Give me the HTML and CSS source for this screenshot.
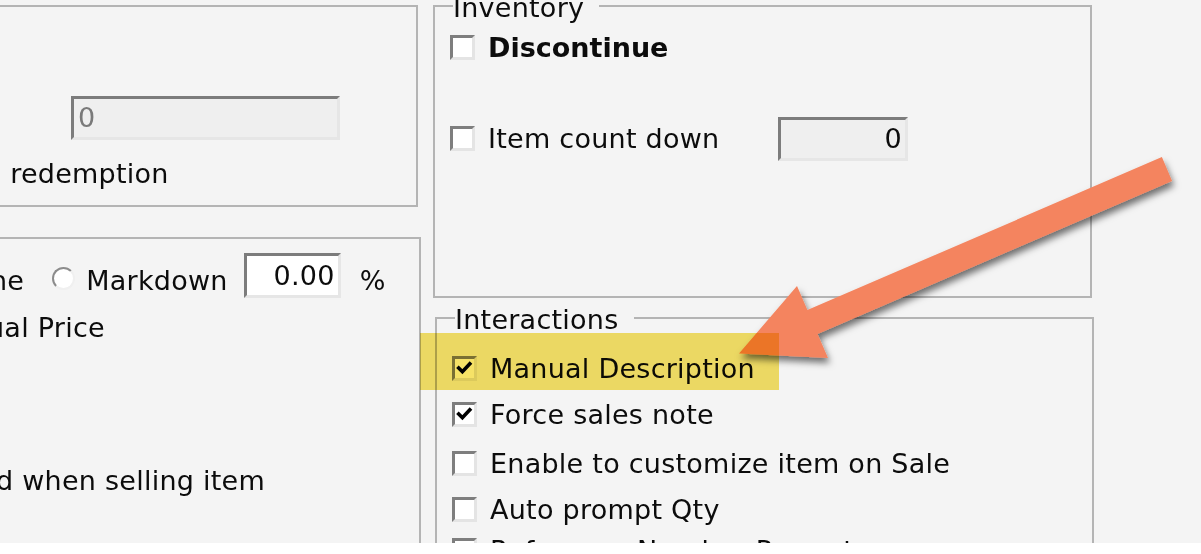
FILE: index.html
```html
<!DOCTYPE html>
<html>
<head>
<meta charset="utf-8">
<link rel="stylesheet" href="styles.css">
</head>
<body>
<div class="screen">
  <div class="cols">
    <div class="left">
      <div class="group group-a">
        <div class="field field-disabled field-points"><span class="val">0</span></div>
        <div class="line line-redeem">n redemption</div>
      </div>
      <div class="group group-b">
        <div class="row-markdown">
          <span class="txt txt-none">ne</span>
          <span class="radio"></span>
          <span class="txt txt-markdown">Markdown</span>
          <div class="field field-white field-md"><span class="val">0.00</span></div>
          <span class="txt txt-pct">%</span>
        </div>
        <div class="line line-price">ual Price</div>
        <div class="line line-selling">d when selling item</div>
      </div>
    </div>
    <div class="right">
      <fieldset class="gbox inventory">
        <legend>Inventory</legend>
        <div class="chk-row row-disc"><span class="cb"></span><span class="lbl bold">Discontinue</span></div>
        <div class="chk-row row-count"><span class="cb"></span><span class="lbl lbl-count">Item count down</span><div class="field field-disabled field-count"><span class="val">0</span></div></div>
      </fieldset>
      <fieldset class="gbox interactions">
        <legend>Interactions</legend>
        <div class="chk-row row-first"><span class="cb checked"><svg viewBox="0 0 18 18"><path d="M3.5 8.5 L7 12 L14 4.5"/></svg></span><span class="lbl">Manual Description</span></div>
        <div class="chk-row"><span class="cb checked"><svg viewBox="0 0 18 18"><path d="M3.5 8.5 L7 12 L14 4.5"/></svg></span><span class="lbl">Force sales note</span></div>
        <div class="chk-row row-gap"><span class="cb"></span><span class="lbl">Enable to customize item on Sale</span></div>
        <div class="chk-row"><span class="cb"></span><span class="lbl">Auto prompt Qty</span></div>
        <div class="chk-row row-last"><span class="cb"></span><span class="lbl">Reference Number Prompt</span></div>
      </fieldset>
    </div>
  </div>
  <svg class="arrow" width="1201" height="543" viewBox="0 0 1201 543">
    <defs>
      <filter id="sh" x="-10%" y="-10%" width="130%" height="140%">
        <feDropShadow dx="2" dy="5" stdDeviation="3.5" flood-color="#000" flood-opacity="0.55"/>
      </filter>
    </defs>
    <polygon filter="url(#sh)" fill="#f4845f" points="1161.9,157.1 807.4,310.1 797,286 739,353.6 828,358 817.6,333.9 1172.1,180.9"/>
  </svg>
  <div class="highlight"></div>
</div>
</body>
</html>
```

FILE: styles.css
```css
* { box-sizing: border-box; }

body {
  margin: 0;
  background: #ffffff;
  font-family: "DejaVu Sans", Verdana, sans-serif;
  font-size: 27px;
  letter-spacing: 0.25px;
  color: #0c0c0c;
}

.screen {
  position: relative;
  height: 543px;
  overflow: hidden;
  background: #f4f4f4;
}

.cols {
  display: flex;
  align-items: flex-start;
}

/* ---------- left column (clipped at the window edge) ---------- */
.left {
  flex: none;
  width: 461px;
  margin-left: -40px;
}

.group {
  border: 2px solid #b4b4b4;
}

.group-a {
  margin-top: 5px;
  width: 458px;
  height: 202px;
}

.group-b {
  margin-top: 30px;
  width: 461px;
  height: 420px;
}

.line {
  line-height: 30px;
  white-space: nowrap;
}

.line-redeem { margin: 19px 0 0 22px; }
.line-price { margin: 15px 0 0 25px; }
.line-selling { margin: 123px 0 0 34px; }

.field {
  display: flex;
  align-items: center;
  justify-content: flex-end;
  border: 3px solid;
  border-color: #7c7c7c #e6e6e6 #e6e6e6 #7c7c7c;
  background: #efefef;
  line-height: 30px;
}

.field-white { background: #ffffff; }

.field .val { padding-right: 3px; }

.field-points {
  margin: 89px 0 0 109px;
  width: 269px;
  height: 44px;
  justify-content: flex-start;
}

.field-points .val {
  padding-left: 4px;
  color: #7a7a7a;
}

.row-markdown {
  display: flex;
  align-items: center;
  height: 45px;
  margin-top: 14px;
  white-space: nowrap;
}

.txt {
  line-height: 30px;
  margin-top: 10px;
}

.txt-none { margin-left: 28px; }

.radio {
  flex: none;
  width: 23px;
  height: 23px;
  margin: 5px 0 0 28px;
  border-radius: 50%;
  border: 2px solid;
  border-color: #8c8c8c #f0f0f0 #f0f0f0 #8c8c8c;
  background: #ffffff;
}

.txt-markdown { margin-left: 11px; }

.field-md {
  flex: none;
  width: 97px;
  height: 45px;
  margin-left: 16px;
}

.txt-pct { margin-left: 19px; }

/* ---------- right column ---------- */
.right {
  flex: none;
  width: 661px;
  margin-left: 12px;
}

.gbox {
  margin: 0;
  padding: 0 0 0 15px;
  min-width: 0;
  border: 2px solid #b4b4b4;
  width: 659px;
}

.gbox legend {
  padding: 5px 15px 0 0;
  margin-left: 3px;
  line-height: 12px;
  white-space: nowrap;
}

.inventory {
  margin-top: -3px;
  height: 301px;
}

.interactions {
  margin: 11px 0 0 2px;
  height: 320px;
}

.chk-row {
  display: flex;
  align-items: center;
  height: 46px;
  white-space: nowrap;
}

.row-disc { margin-top: 10px; }
.row-count { margin-top: 45px; }
.row-first { margin-top: 19px; }
.row-gap { margin-top: 3px; }
.row-last { margin-top: -5px; }

.cb {
  flex: none;
  display: flex;
  align-items: center;
  justify-content: center;
  width: 25px;
  height: 25px;
  border: 3px solid;
  border-color: #7e7e7e #e4e4e4 #e4e4e4 #7e7e7e;
  background: #ffffff;
}

.cb svg {
  width: 19px;
  height: 19px;
}

.cb svg path {
  fill: none;
  stroke: #000000;
  stroke-width: 3.4;
  stroke-linecap: square;
}

.lbl {
  margin-left: 13px;
  line-height: 30px;
  padding-top: 2px;
}

.bold { font-weight: bold; letter-spacing: 0; }

.lbl-count {
  flex: none;
  width: 290px;
}

.field-count {
  flex: none;
  width: 130px;
  height: 44px;
  margin-top: 2px;
}

/* ---------- annotations ---------- */
.arrow {
  position: absolute;
  left: 0;
  top: 0;
  pointer-events: none;
}

.highlight {
  position: absolute;
  left: 420px;
  top: 333px;
  width: 359px;
  height: 57px;
  background: #f6e267;
  mix-blend-mode: multiply;
}
```
